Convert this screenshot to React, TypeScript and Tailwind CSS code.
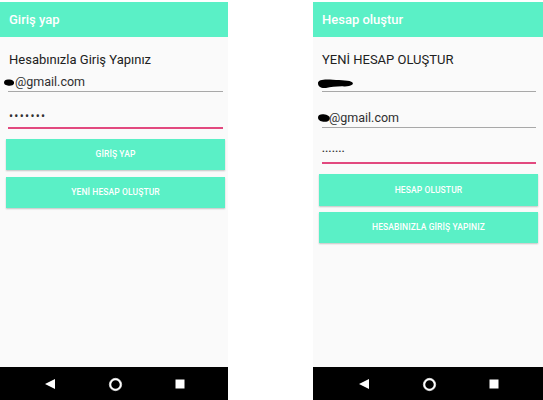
import React from 'react';

const font = { fontFamily: 'Roboto, "Noto Sans", sans-serif' };

function NavBar() {
  return (
    <div className="h-[33px] bg-black flex items-center justify-center gap-[52px] pt-[1px]">
      <svg width="12" height="10" viewBox="0 0 12 10">
        <polygon points="11,0 11,10 1,5" fill="white" />
      </svg>
      <svg width="15" height="15" viewBox="0 0 15 15">
        <circle cx="7.5" cy="7.5" r="6.2" fill="none" stroke="#9e9e9e" strokeWidth="1" />
        <circle cx="7.5" cy="7.5" r="5.2" fill="none" stroke="white" strokeWidth="1.9" />
      </svg>
      <svg width="10" height="10" viewBox="0 0 10 10">
        <rect x="0.5" y="0.5" width="9" height="9" fill="white" />
      </svg>
    </div>
  );
}

function AppBar({ title }: { title: string }) {
  return (
    <div className="h-[35px] bg-[#5af0c6] flex items-center pl-[9px] text-[13px] font-medium text-white">
      {title}
    </div>
  );
}

function SmallBlob() {
  return (
    <svg width="12" height="9" viewBox="0 0 12 9" className="shrink-0">
      <path d="M1 4.5 C1 1.5 4 1 7 1.6 C10 2.2 11.5 3.6 11 5.6 C10.4 7.8 7 8.2 4.5 7.6 C2 7 1 6.2 1 4.5 Z" fill="black" />
    </svg>
  );
}

function BigBlob() {
  return (
    <svg width="14" height="10" viewBox="0 0 14 10" className="shrink-0">
      <path d="M1 4.5 C1 1.2 4.5 0.8 8 1.4 C11.5 2 13.4 3.8 12.8 6 C12.2 8.6 8.4 9.2 5.2 8.6 C2.4 8 1 6.6 1 4.5 Z" fill="black" />
    </svg>
  );
}

function LongBlob() {
  return (
    <svg width="37" height="11" viewBox="0 0 37 11" className="shrink-0">
      <path d="M1 5 C1 1.5 8 1 16 1.8 C24 2.4 33 2 35.5 4.6 C37 6.6 34 8.6 27 8.4 C20 8.2 14 9 9 10 C4 10.6 1 8.6 1 5 Z" fill="black" />
    </svg>
  );
}

function Button({ label, className }: { label: string; className: string }) {
  return (
    <div
      className={`bg-[#5af0c6] flex items-center justify-center text-[8.5px] font-medium text-white tracking-[0.1px] shadow-[0_1px_1.5px_rgba(0,0,0,0.22)] ${className}`}
    >
      {label}
    </div>
  );
}

function LoginPhone() {
  return (
    <div className="w-[228px] h-[400px] flex flex-col shrink-0">
      <div className="h-[2px] bg-white" />
      <AppBar title="Giriş yap" />
      <div className="flex-1 bg-[#fafafa] flex flex-col">
        <div className="mt-[13px] ml-[9px] h-[20px] leading-[20px] text-[13px] text-[#212121]">
          Hesabınızla Giriş Yapınız
        </div>
        <div className="ml-[8px] mr-[5px] h-[22px] border-b border-[#a8a8a8] flex items-center pt-[3px]">
          <div className="-ml-[5px] flex items-center">
            <SmallBlob />
            <span className="text-[12.5px] text-[#303030] leading-[16px]">@gmail.com</span>
          </div>
        </div>
        <div className="ml-[8px] mr-[5px] h-[37px] border-b-2 border-[#e2497f] flex items-end pb-[3px]">
          <span className="ml-[1px] text-[12px] leading-[16px] text-[#303030] tracking-[1.3px]">•••••••</span>
        </div>
        <Button label="GİRİŞ YAP" className="mt-[10px] ml-[6px] mr-[3px] h-[31px]" />
        <Button label="YENİ HESAP OLUŞTUR" className="mt-[7px] ml-[6px] mr-[3px] h-[31px]" />
      </div>
      <NavBar />
    </div>
  );
}

function RegisterPhone() {
  return (
    <div className="w-[230px] h-[400px] flex flex-col shrink-0">
      <div className="h-[2px] bg-white" />
      <AppBar title="Hesap oluştur" />
      <div className="flex-1 bg-[#fafafa] flex flex-col">
        <div className="mt-[13px] ml-[9px] h-[20px] leading-[20px] text-[13px] text-[#212121]">
          YENİ HESAP OLUŞTUR
        </div>
        <div className="ml-[9px] mr-[7px] h-[22px] border-b border-[#a8a8a8] flex items-end pb-[2px]">
          <div className="-ml-[5px] flex items-center">
            <LongBlob />
          </div>
        </div>
        <div className="ml-[9px] mr-[7px] h-[36px] border-b border-[#a8a8a8] flex items-end pb-[1px]">
          <div className="-ml-[5px] flex items-center">
            <BigBlob />
            <span className="-ml-[2px] text-[12.5px] text-[#303030] leading-[16px]">@gmail.com</span>
          </div>
        </div>
        <div className="ml-[9px] mr-[7px] h-[36px] border-b-2 border-[#e2497f] flex items-end pb-[4px]">
          <span className="text-[8px] leading-[12px] text-[#303030] tracking-[0.6px]">•••••••</span>
        </div>
        <Button label="HESAP OLUSTUR" className="mt-[10px] ml-[6px] mr-[5px] h-[32px]" />
        <Button label="HESABINIZLA GİRİŞ YAPINIZ" className="mt-[6px] ml-[6px] mr-[5px] h-[31px]" />
      </div>
      <NavBar />
    </div>
  );
}

export default function App() {
  return (
    <div className="w-[543px] h-[400px] bg-white flex overflow-hidden" style={font}>
      <LoginPhone />
      <div className="w-[85px] shrink-0" />
      <RegisterPhone />
    </div>
  );
}
